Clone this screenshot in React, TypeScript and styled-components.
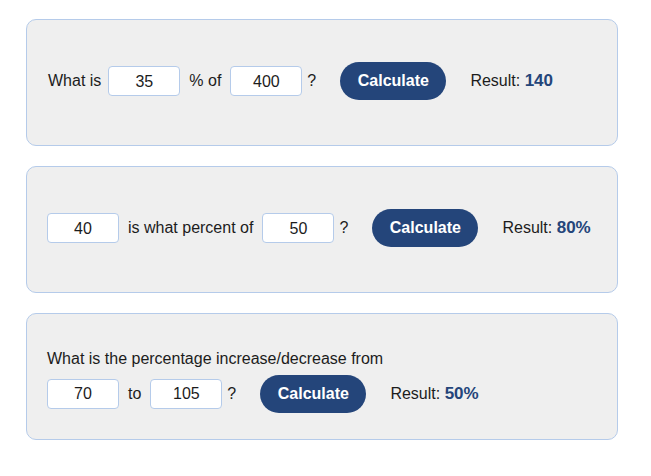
import React from "react";
import styled, { createGlobalStyle } from "styled-components";

const Global = createGlobalStyle`
  html, body { margin: 0; padding: 0; background: #ffffff; }
  body { font-family: "Liberation Sans", Arial, Helvetica, sans-serif; color: #1c1c1c; }
`;

const Page = styled.div`
  width: 592px;
  margin: 19px 0 0 26px;
  display: flex;
  flex-direction: column;
  gap: 20px;
`;

const Card = styled.section<{ $top?: number }>`
  box-sizing: border-box;
  height: 127px;
  border: 1px solid #b5cbea;
  border-radius: 10px;
  background: #efefef;
  padding: ${(p) => p.$top ?? 0}px 20px 3px;
  display: flex;
  flex-direction: column;
  justify-content: center;
`;

const Title = styled.div`
  font-size: 16px;
  line-height: 18px;
  margin-bottom: 7px;
`;

const Row = styled.div`
  display: flex;
  align-items: center;
  font-size: 16px;
  line-height: 18px;
`;

const Word = styled.span<{ $pad?: string }>`
  padding: ${(p) => p.$pad ?? "0 4px"};
  white-space: nowrap;
`;

const NumInput = styled.input<{ $first?: boolean }>`
  box-sizing: border-box;
  width: 72px;
  height: 30px;
  margin: 0 5px 0 ${(p) => (p.$first ? 0 : 5)}px;
  border: 1px solid #b5cbea;
  border-radius: 4px;
  background: #ffffff;
  font-family: "Liberation Sans", Arial, Helvetica, sans-serif;
  font-size: 16px;
  color: #1c1c1c;
  text-align: center;
  padding: 1px 0 0;
  outline: none;
`;

const CalcButton = styled.button`
  height: 38px;
  padding: 0 17.5px;
  margin: 0 20px;
  border: none;
  border-radius: 19px;
  background: #24457a;
  color: #ffffff;
  font-family: "Liberation Sans", Arial, Helvetica, sans-serif;
  font-size: 16px;
  font-weight: bold;
  cursor: pointer;
`;

const Result = styled.span`
  padding-left: 4px;
  white-space: nowrap;
`;

const Value = styled.strong`
  color: #24457a;
  font-weight: bold;
  font-size: 17px;
`;

export default function App() {
  return (
    <>
      <Global />
      <Page>
        <Card>
          <Row>
            <Word $pad="0 2px 0 1px">What is</Word>
            <NumInput defaultValue="35" />
            <Word>% of</Word>
            <NumInput defaultValue="400" />
            <Word $pad="0 4px 0 0">?</Word>
            <CalcButton>Calculate</CalcButton>
            <Result>
              Result: <Value>140</Value>
            </Result>
          </Row>
        </Card>
        <Card>
          <Row>
            <NumInput $first defaultValue="40" />
            <Word>is what percent of</Word>
            <NumInput defaultValue="50" />
            <Word $pad="0 4px 0 0">?</Word>
            <CalcButton>Calculate</CalcButton>
            <Result>
              Result: <Value>80%</Value>
            </Result>
          </Row>
        </Card>
        <Card $top={12}>
          <Title>What is the percentage increase/decrease from</Title>
          <Row>
            <NumInput $first defaultValue="70" />
            <Word>to</Word>
            <NumInput defaultValue="105" />
            <Word $pad="0 4px 0 0">?</Word>
            <CalcButton>Calculate</CalcButton>
            <Result>
              Result: <Value>50%</Value>
            </Result>
          </Row>
        </Card>
      </Page>
    </>
  );
}
